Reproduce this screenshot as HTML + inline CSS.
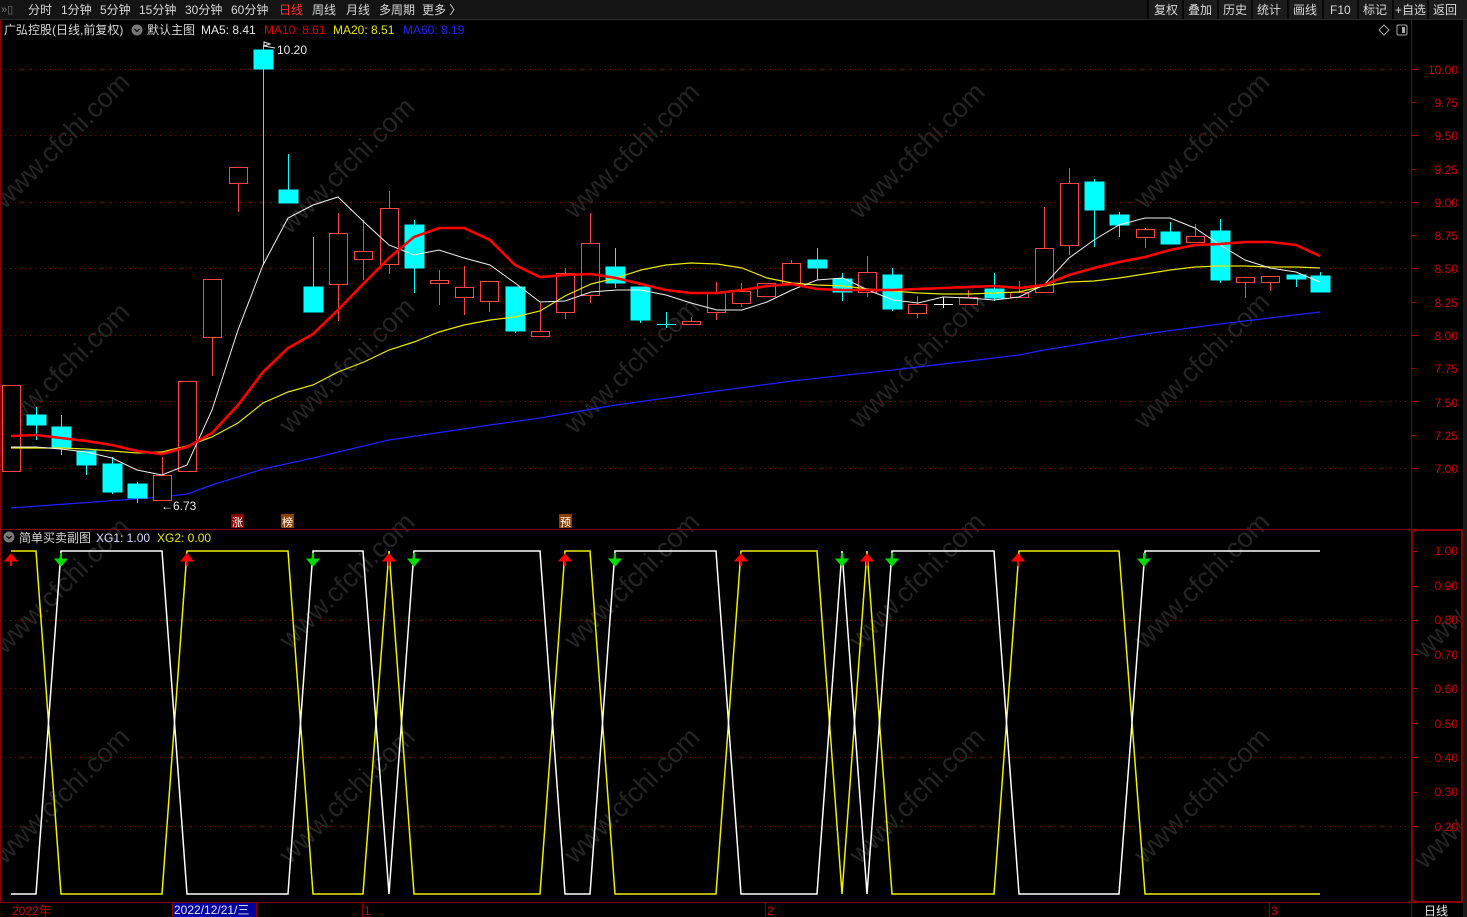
<!DOCTYPE html>
<html><head><meta charset="utf-8">
<style>
html,body{margin:0;padding:0;background:#000;width:1467px;height:917px;overflow:hidden}
svg{display:block}
text{font-family:"Liberation Sans","Noto Sans CJK SC",sans-serif;font-size:12px}
.wm text{font-size:27px}
.sm{font-size:11px}
</style></head><body>
<svg width="1467" height="917" xmlns="http://www.w3.org/2000/svg">
<rect width="1467" height="917" fill="#000"/>
<!-- top bar -->
<rect x="0" y="0" width="1467" height="19" fill="#141414"/>
<line x1="0" y1="19.5" x2="1467" y2="19.5" stroke="#2a2a2a"/>
<rect x="1148" y="0" width="319" height="19" fill="#1c1c1c"/>
<g stroke="#000" stroke-width="1.5">
<line x1="1148" y1="0" x2="1148" y2="19"/><line x1="1183" y1="0" x2="1183" y2="19"/><line x1="1218" y1="0" x2="1218" y2="19"/><line x1="1252" y1="0" x2="1252" y2="19"/><line x1="1288" y1="0" x2="1288" y2="19"/><line x1="1323" y1="0" x2="1323" y2="19"/><line x1="1358" y1="0" x2="1358" y2="19"/><line x1="1393" y1="0" x2="1393" y2="19"/><line x1="1428" y1="0" x2="1428" y2="19"/></g>
<text x="1" y="13" fill="#777" class="sm">»▯</text>
<g fill="#d8d8d8">
<text x="28" y="14">分时</text><text x="61" y="14">1分钟</text><text x="100" y="14">5分钟</text><text x="139" y="14">15分钟</text><text x="185" y="14">30分钟</text><text x="231" y="14">60分钟</text>
<text x="279" y="14" fill="#ff3030">日线</text><text x="312" y="14">周线</text><text x="346" y="14">月线</text><text x="379" y="14">多周期</text><text x="422" y="14">更多 〉</text>
<text x="1154" y="14">复权</text><text x="1188" y="14">叠加</text><text x="1223" y="14">历史</text><text x="1257" y="14">统计</text><text x="1293" y="14">画线</text><text x="1330" y="14">F10</text><text x="1363" y="14">标记</text><text x="1395" y="14">+自选</text><text x="1433" y="14">返回</text>
</g>
<!-- watermarks -->
<g fill="#242424" class="wm">
<text transform="translate(5,210) rotate(-45)">www.cfchi.com</text>
<text transform="translate(290,235) rotate(-45)">www.cfchi.com</text>
<text transform="translate(575,220) rotate(-45)">www.cfchi.com</text>
<text transform="translate(860,220) rotate(-45)">www.cfchi.com</text>
<text transform="translate(1145,210) rotate(-45)">www.cfchi.com</text>
<text transform="translate(5,440) rotate(-45)">www.cfchi.com</text>
<text transform="translate(290,435) rotate(-45)">www.cfchi.com</text>
<text transform="translate(575,435) rotate(-45)">www.cfchi.com</text>
<text transform="translate(860,430) rotate(-45)">www.cfchi.com</text>
<text transform="translate(1145,430) rotate(-45)">www.cfchi.com</text>
<text transform="translate(5,655) rotate(-45)">www.cfchi.com</text>
<text transform="translate(290,650) rotate(-45)">www.cfchi.com</text>
<text transform="translate(575,650) rotate(-45)">www.cfchi.com</text>
<text transform="translate(860,650) rotate(-45)">www.cfchi.com</text>
<text transform="translate(1145,650) rotate(-45)">www.cfchi.com</text>
<text transform="translate(5,865) rotate(-45)">www.cfchi.com</text>
<text transform="translate(290,865) rotate(-45)">www.cfchi.com</text>
<text transform="translate(575,865) rotate(-45)">www.cfchi.com</text>
<text transform="translate(860,865) rotate(-45)">www.cfchi.com</text>
<text transform="translate(1145,865) rotate(-45)">www.cfchi.com</text>
<text transform="translate(1425,660) rotate(-45)">www.cfchi.com</text>
<text transform="translate(1425,870) rotate(-45)">www.cfchi.com</text>
</g>
<!-- grid -->
<g stroke="#8a0000" stroke-dasharray="1,4">
<line x1="0" y1="69.5" x2="1408" y2="69.5"/><line x1="0" y1="135.5" x2="1408" y2="135.5"/><line x1="0" y1="202.5" x2="1408" y2="202.5"/><line x1="0" y1="268.5" x2="1408" y2="268.5"/><line x1="0" y1="335.5" x2="1408" y2="335.5"/><line x1="0" y1="401.5" x2="1408" y2="401.5"/><line x1="0" y1="468.5" x2="1408" y2="468.5"/>
<line x1="0" y1="620.5" x2="1408" y2="620.5"/><line x1="0" y1="688.5" x2="1408" y2="688.5"/><line x1="0" y1="757.5" x2="1408" y2="757.5"/><line x1="0" y1="826.5" x2="1408" y2="826.5"/>
</g>
<!-- frame -->
<g stroke="#8a0000" fill="none">
<line x1="1411.5" y1="20" x2="1411.5" y2="529"/>
<line x1="0" y1="529.5" x2="1467" y2="529.5"/>
<line x1="0" y1="902.5" x2="1467" y2="902.5"/>
<line x1="0.5" y1="20" x2="0.5" y2="902"/>
<rect x="1412" y="530" width="50" height="372" stroke-width="2"/>
</g>
<rect x="1463" y="20" width="4" height="897" fill="#1a1a1a"/>
<!-- axis labels -->
<g fill="#d00000" text-anchor="end">
<text x="1458" y="74">10.00</text><text x="1458" y="107">9.75</text><text x="1458" y="140">9.50</text><text x="1458" y="174">9.25</text><text x="1458" y="207">9.00</text><text x="1458" y="240">8.75</text><text x="1458" y="273">8.50</text><text x="1458" y="307">8.25</text><text x="1458" y="340">8.00</text><text x="1458" y="373">7.75</text><text x="1458" y="407">7.50</text><text x="1458" y="440">7.25</text><text x="1458" y="473">7.00</text>
<text x="1458" y="555">1.00</text><text x="1458" y="590">0.90</text><text x="1458" y="624">0.80</text><text x="1458" y="659">0.70</text><text x="1458" y="693">0.60</text><text x="1458" y="728">0.50</text><text x="1458" y="762">0.40</text><text x="1458" y="796">0.30</text><text x="1458" y="831">0.20</text>
</g>
<g stroke="#b00000">
<line x1="1411" y1="69.5" x2="1418" y2="69.5"/><line x1="1411" y1="102.5" x2="1415" y2="102.5"/><line x1="1411" y1="135.5" x2="1418" y2="135.5"/><line x1="1411" y1="169.5" x2="1415" y2="169.5"/><line x1="1411" y1="202.5" x2="1418" y2="202.5"/><line x1="1411" y1="235.5" x2="1415" y2="235.5"/><line x1="1411" y1="268.5" x2="1418" y2="268.5"/><line x1="1411" y1="302.5" x2="1415" y2="302.5"/><line x1="1411" y1="335.5" x2="1418" y2="335.5"/><line x1="1411" y1="368.5" x2="1415" y2="368.5"/><line x1="1411" y1="401.5" x2="1418" y2="401.5"/><line x1="1411" y1="435.5" x2="1415" y2="435.5"/><line x1="1411" y1="468.5" x2="1418" y2="468.5"/>
<line x1="1413" y1="551.5" x2="1417" y2="551.5"/><line x1="1413" y1="586.5" x2="1417" y2="586.5"/><line x1="1413" y1="620.5" x2="1417" y2="620.5"/><line x1="1413" y1="654.5" x2="1417" y2="654.5"/><line x1="1413" y1="688.5" x2="1417" y2="688.5"/><line x1="1413" y1="723.5" x2="1417" y2="723.5"/><line x1="1413" y1="757.5" x2="1417" y2="757.5"/><line x1="1413" y1="792.5" x2="1417" y2="792.5"/><line x1="1413" y1="826.5" x2="1417" y2="826.5"/>
</g>
<!-- header -->
<text x="4" y="34" fill="#d8d8d8">广弘控股(日线,前复权)</text>
<circle cx="137" cy="30" r="5.5" fill="#777"/><path d="M134.5 29 L137 31.5 L139.5 29" stroke="#111" stroke-width="1.3" fill="none"/>
<text x="147" y="34" fill="#d8d8d8">默认主图</text>
<text x="201" y="34" fill="#e8e8e8">MA5: 8.41</text>
<text x="264" y="34" fill="#e00000">MA10: 8.61</text>
<text x="333" y="34" fill="#e8e800">MA20: 8.51</text>
<text x="403" y="34" fill="#2020ff">MA60: 8.19</text>
<path d="M1384 25 L1389 30 L1384 35 L1379 30 Z" stroke="#aaa" fill="none"/>
<rect x="1397" y="25" width="10" height="10" rx="1.5" stroke="#aaa" fill="none"/><rect x="1402" y="27" width="3" height="6" fill="#aaa"/>
<!-- MA60 -->
<polyline fill="none" stroke="#2020ff" stroke-width="1.2" points="11,508 162,497 187,494 212,485 263,469 313,458 389,440 490,425 540,418 616,405 717,391 792,381 893,370 1019,355 1044,350 1094,342 1145,334 1220,324 1270,318 1320,312"/>
<!-- candles -->
<g stroke="#ff4444" fill="#000" stroke-width="1">
<rect x="2.5" y="385.5" width="18" height="86"/>
<line x1="162.5" y1="457" x2="162.5" y2="475"/><rect x="153.5" y="475.5" width="18" height="25"/>
<rect x="178.5" y="381.5" width="18" height="90"/>
<line x1="212.5" y1="337" x2="212.5" y2="376"/><rect x="203.5" y="279.5" width="18" height="58"/>
<line x1="238.5" y1="183" x2="238.5" y2="212"/><rect x="229.5" y="167.5" width="18" height="16"/>
<line x1="338.5" y1="213" x2="338.5" y2="321"/><rect x="329.5" y="233.5" width="18" height="51"/>
<line x1="363.5" y1="220" x2="363.5" y2="280"/><rect x="354.5" y="251.5" width="18" height="8"/>
<line x1="389.5" y1="191" x2="389.5" y2="274"/><rect x="380.5" y="208.5" width="18" height="56"/>
<line x1="439.5" y1="270" x2="439.5" y2="305"/><rect x="430.5" y="280.5" width="18" height="3"/>
<line x1="464.5" y1="266" x2="464.5" y2="315"/><rect x="455.5" y="287.5" width="18" height="10"/>
<line x1="489.5" y1="281" x2="489.5" y2="312"/><rect x="480.5" y="281.5" width="18" height="20"/>
<line x1="540.5" y1="303" x2="540.5" y2="336"/><rect x="531.5" y="331.5" width="18" height="5"/>
<line x1="565.5" y1="268" x2="565.5" y2="319"/><rect x="556.5" y="273.5" width="18" height="39"/>
<line x1="590.5" y1="213" x2="590.5" y2="303"/><rect x="581.5" y="243.5" width="18" height="52"/>
<line x1="691.5" y1="317" x2="691.5" y2="324"/><rect x="682.5" y="321.5" width="18" height="3"/>
<line x1="716.5" y1="282" x2="716.5" y2="320"/><rect x="707.5" y="292.5" width="18" height="20"/>
<line x1="741.5" y1="283" x2="741.5" y2="307"/><rect x="732.5" y="291.5" width="18" height="12"/>
<rect x="757.5" y="283.5" width="18" height="13"/>
<line x1="791.5" y1="260" x2="791.5" y2="283"/><rect x="782.5" y="263.5" width="18" height="20"/>
<line x1="867.5" y1="256" x2="867.5" y2="297"/><rect x="858.5" y="272.5" width="18" height="20"/>
<line x1="917.5" y1="296" x2="917.5" y2="318"/><rect x="908.5" y="304.5" width="18" height="9"/>
<line x1="968.5" y1="290" x2="968.5" y2="304"/><rect x="959.5" y="297.5" width="18" height="7"/>
<line x1="1019.5" y1="281" x2="1019.5" y2="297"/><rect x="1010.5" y="292.5" width="18" height="5"/>
<line x1="1044.5" y1="207" x2="1044.5" y2="292"/><rect x="1035.5" y="248.5" width="18" height="44"/>
<line x1="1069.5" y1="168" x2="1069.5" y2="255"/><rect x="1060.5" y="183.5" width="18" height="62"/>
<line x1="1145.5" y1="228" x2="1145.5" y2="248"/><rect x="1136.5" y="229.5" width="18" height="8"/>
<line x1="1195.5" y1="224" x2="1195.5" y2="242"/><rect x="1186.5" y="236.5" width="18" height="6"/>
<line x1="1245.5" y1="277" x2="1245.5" y2="298"/><rect x="1236.5" y="277.5" width="18" height="5"/>
<line x1="1270.5" y1="276" x2="1270.5" y2="291"/><rect x="1261.5" y="276.5" width="18" height="6"/>
</g>
<g stroke="#00ffff" fill="#00ffff" stroke-width="1">
<line x1="36.5" y1="407" x2="36.5" y2="440"/><rect x="27" y="415" width="19" height="10"/>
<line x1="61.5" y1="415" x2="61.5" y2="455"/><rect x="52" y="427" width="19" height="21"/>
<line x1="86.5" y1="451" x2="86.5" y2="475"/><rect x="77" y="451" width="19" height="14"/>
<line x1="112.5" y1="457" x2="112.5" y2="494"/><rect x="103" y="464" width="19" height="28"/>
<line x1="137.5" y1="482" x2="137.5" y2="503"/><rect x="128" y="484" width="19" height="14"/>
<line x1="263.5" y1="45" x2="263.5" y2="265"/><rect x="254" y="50" width="19" height="19"/>
<line x1="288.5" y1="154" x2="288.5" y2="203"/><rect x="279" y="190" width="19" height="13"/>
<line x1="313.5" y1="237" x2="313.5" y2="312"/><rect x="304" y="287" width="19" height="25"/>
<line x1="414.5" y1="220" x2="414.5" y2="293"/><rect x="405" y="225" width="19" height="43"/>
<line x1="515.5" y1="287" x2="515.5" y2="333"/><rect x="506" y="287" width="19" height="44"/>
<line x1="615.5" y1="248" x2="615.5" y2="288"/><rect x="606" y="267" width="19" height="16"/>
<line x1="640.5" y1="287" x2="640.5" y2="323"/><rect x="631" y="287" width="19" height="33"/>
<line x1="666.5" y1="312" x2="666.5" y2="328"/><line x1="657" y1="324.5" x2="676" y2="324.5"/>
<line x1="817.5" y1="248" x2="817.5" y2="280"/><rect x="808" y="260" width="19" height="8"/>
<line x1="842.5" y1="273" x2="842.5" y2="301"/><rect x="833" y="279" width="19" height="13"/>
<line x1="892.5" y1="268" x2="892.5" y2="311"/><rect x="883" y="275" width="19" height="34"/>
<line x1="994.5" y1="273" x2="994.5" y2="301"/><rect x="985" y="289" width="19" height="9"/>
<line x1="1094.5" y1="179" x2="1094.5" y2="247"/><rect x="1085" y="182" width="19" height="28"/>
<line x1="1119.5" y1="212" x2="1119.5" y2="237"/><rect x="1110" y="215" width="19" height="10"/>
<line x1="1170.5" y1="222" x2="1170.5" y2="244"/><rect x="1161" y="232" width="19" height="12"/>
<line x1="1220.5" y1="219" x2="1220.5" y2="283"/><rect x="1211" y="231" width="19" height="49"/>
<line x1="1296.5" y1="275" x2="1296.5" y2="287"/><rect x="1287" y="275" width="19" height="4"/>
<line x1="1320.5" y1="272" x2="1320.5" y2="292"/><rect x="1311" y="276" width="19" height="16"/>
</g>
<g stroke="#fff"><line x1="943.5" y1="297" x2="943.5" y2="308"/><line x1="934" y1="304.5" x2="953" y2="304.5"/></g>
<!-- MAs -->
<polyline fill="none" stroke="#e8e800" stroke-width="1.2" points="11,448 36,448 61,448 86,449 112,451 137,453 162,452 187,446 212,437 238,423 263,403 288,392 313,385 338,372 364,362 389,350 414,342 439,332 464,325 490,320 515,317 540,311 565,296 591,284 616,278 641,270 666,265 691,263 717,264 742,268 767,278 792,283 817,285 843,286 868,289 893,291 918,293 943,294 969,294 994,293 1019,292 1044,286 1069,282 1094,281 1119,278 1145,274 1170,270 1195,267 1220,266 1245,266 1270,267 1296,267 1320,268"/>
<polyline fill="none" stroke="#f0f0f0" stroke-width="1" points="11,447 36,447 61,449 86,452 112,458 137,470 162,475 187,465 212,410 238,330 263,265 288,218 313,205 338,197 364,222 389,245 414,255 439,250 464,258 490,265 515,283 540,302 565,301 591,292 616,290 641,290 666,295 691,303 717,310 742,310 767,302 792,290 817,280 843,278 868,290 893,300 918,303 943,297 969,298 994,300 1019,297 1044,285 1069,258 1094,240 1119,225 1145,218 1170,218 1195,228 1220,245 1245,260 1270,268 1296,272 1320,282"/>
<polyline fill="none" stroke="#ff0000" stroke-width="2.6" points="11,436 36,435 61,438 86,441 112,445 137,451 162,454 187,447 212,433 238,405 263,372 288,348 313,334 338,310 364,283 389,258 414,237 439,228 464,228 490,240 515,265 540,277 565,275 591,274 616,278 641,284 666,290 691,293 717,293 742,290 767,286 792,284 817,289 843,290 868,290 893,290 918,289 943,288 969,287 994,286 1019,288 1044,285 1069,275 1094,268 1119,262 1145,257 1170,250 1195,245 1220,244 1245,242 1270,242 1296,245 1320,256"/>
<!-- price labels -->
<path d="M264 46 L264 42 L270 44 Z M264 46 L275 48" stroke="#e8e8e8" fill="none"/>
<text x="277" y="54" fill="#e8e8e8">10.20</text>
<text x="161" y="510" fill="#e8e8e8">←6.73</text>
<rect x="231" y="514" width="13" height="14" fill="#8a0000"/><text x="232" y="526" fill="#fff" class="sm">涨</text>
<rect x="281" y="514" width="13" height="14" fill="#8a4000"/><text x="282" y="526" fill="#fff" class="sm">榜</text>
<rect x="559" y="514" width="13" height="14" fill="#8a4000"/><text x="560" y="526" fill="#fff" class="sm">预</text>
<!-- sub header -->
<circle cx="9" cy="537" r="5.5" fill="#777"/><path d="M6.5 536 L9 538.5 L11.5 536" stroke="#111" stroke-width="1.3" fill="none"/>
<text x="19" y="542" fill="#d8d8d8">简单买卖副图</text>
<text x="96" y="542" fill="#d8d8ff">XG1: 1.00</text>
<text x="157" y="542" fill="#e8e800">XG2: 0.00</text>
<!-- sub lines -->
<polyline fill="none" stroke="#f0f000" stroke-width="1.5" points="11,551 36,551 61,894 162,894 187,551 288,551 313,894 363,894 389,551 414,894 540,894 565,551 590,551 615,894 716,894 741,551 817,551 842,894 867,551 892,894 994,894 1019,551 1119,551 1145,894 1320,894"/>
<polyline fill="none" stroke="#fff" stroke-width="1.5" points="11,894 36,894 61,551 162,551 187,894 288,894 313,551 363,551 389,894 414,551 540,551 565,894 590,894 615,551 716,551 741,894 817,894 842,551 867,894 892,551 994,551 1019,894 1119,894 1145,551 1320,551"/>
<!-- arrows -->
<g fill="#ff0000" stroke="#ff0000">
<path d="M5 561 L11 554 L17 561 Z"/><line x1="11" y1="560" x2="11" y2="566" stroke-width="2"/>
<path d="M181 561 L187 554 L193 561 Z"/><line x1="187" y1="560" x2="187" y2="566" stroke-width="2"/>
<path d="M383 561 L389 554 L395 561 Z"/><line x1="389" y1="560" x2="389" y2="566" stroke-width="2"/>
<path d="M559 561 L565 554 L571 561 Z"/><line x1="565" y1="560" x2="565" y2="566" stroke-width="2"/>
<path d="M735 561 L741 554 L747 561 Z"/><line x1="741" y1="560" x2="741" y2="566" stroke-width="2"/>
<path d="M861 561 L867 554 L873 561 Z"/><line x1="867" y1="560" x2="867" y2="566" stroke-width="2"/>
<path d="M1012 561 L1018 554 L1024 561 Z"/><line x1="1018" y1="560" x2="1018" y2="566" stroke-width="2"/>
</g>
<g fill="#00dd00" stroke="#00dd00">
<path d="M55 559 L61 566 L67 559 Z"/><line x1="61" y1="553" x2="61" y2="560" stroke-width="2"/>
<path d="M307 559 L313 566 L319 559 Z"/><line x1="313" y1="553" x2="313" y2="560" stroke-width="2"/>
<path d="M408 559 L414 566 L420 559 Z"/><line x1="414" y1="553" x2="414" y2="560" stroke-width="2"/>
<path d="M609 559 L615 566 L621 559 Z"/><line x1="615" y1="553" x2="615" y2="560" stroke-width="2"/>
<path d="M836 559 L842 566 L848 559 Z"/><line x1="842" y1="553" x2="842" y2="560" stroke-width="2"/>
<path d="M886 559 L892 566 L898 559 Z"/><line x1="892" y1="553" x2="892" y2="560" stroke-width="2"/>
<path d="M1138 559 L1144 566 L1150 559 Z"/><line x1="1144" y1="553" x2="1144" y2="560" stroke-width="2"/>
</g>
<!-- bottom axis -->
<rect x="172" y="903" width="85" height="14" fill="#0000a0"/>
<g stroke="#8a0000"><line x1="172.5" y1="903" x2="172.5" y2="917"/><line x1="256.5" y1="903" x2="256.5" y2="917"/><line x1="362.5" y1="903" x2="362.5" y2="917"/><line x1="765.5" y1="903" x2="765.5" y2="917"/><line x1="1269.5" y1="903" x2="1269.5" y2="917"/><line x1="1411.5" y1="903" x2="1411.5" y2="917"/></g>
<text x="12" y="915" fill="#d00000">2022年</text>
<text x="174" y="914" fill="#e8e8e8">2022/12/21/三</text>
<text x="364" y="915" fill="#d00000">1</text>
<text x="767" y="915" fill="#d00000">2</text>
<text x="1271" y="915" fill="#d00000">3</text>
<text x="1424" y="915" fill="#e8e8e8">日线</text>
</svg>
</body></html>
